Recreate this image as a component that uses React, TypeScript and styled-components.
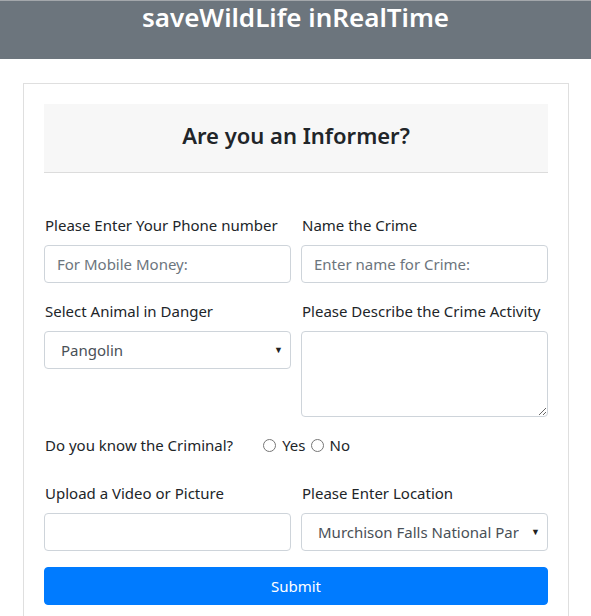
import styled, { createGlobalStyle } from 'styled-components';

const GlobalStyle = createGlobalStyle`
    * { box-sizing: border-box; }
    body {
        margin: 0;
        background: #fff;
        font-family: "Noto Sans", "Open Sans", sans-serif;
        font-size: 15px;
        line-height: 1.5;
        color: #212529;
    }
`;

const TopBar = styled.header`
    height: 59px;
    background: #6c757d;
    border-top: 1px solid #a3a7ab;
    display: flex;
    justify-content: center;
    align-items: flex-start;
`;

const Brand = styled.h1`
    margin: 0;
    color: #fff;
    font-size: 26px;
    font-weight: 600;
    line-height: 33px;
`;

const Container = styled.main`
    padding: 24px 22px 0 23px;
`;

const Card = styled.section`
    border: 1px solid #dfdfdf;
    border-bottom: none;
    padding: 20px 20px 4px;
    min-height: 540px;
`;

const CardHeader = styled.div`
    height: 69px;
    background: #f7f7f7;
    border-bottom: 1px solid #dcdcdc;
    display: flex;
    justify-content: center;
    align-items: center;
`;

const CardTitle = styled.h4`
    margin: 0 0 5px;
    font-size: 22px;
    font-weight: 600;
    color: #212529;
`;

const Form = styled.form`
    padding-top: 40px;
`;

const Row = styled.div`
    display: grid;
    grid-template-columns: 1fr 1fr;
    column-gap: 10px;
    margin-bottom: 16px;
`;

const Group = styled.div`
    display: flex;
    flex-direction: column;
`;

const Label = styled.label`
    margin-bottom: 8px;
    line-height: 24px;
    padding-left: 1px;
`;

const Input = styled.input`
    height: 38px;
    width: 100%;
    padding: 6px 12px;
    border: 1px solid #ced4da;
    border-radius: 4px;
    font: inherit;
    color: #495057;
    &::placeholder { color: #6c757d; }
`;

const TextArea = styled.textarea`
    height: 86px;
    width: 100%;
    padding: 6px 12px;
    border: 1px solid #ced4da;
    border-radius: 4px;
    font: inherit;
    resize: vertical;
`;

const SelectWrap = styled.div`
    position: relative;
`;

const Select = styled.select`
    height: 38px;
    width: 100%;
    padding: 6px 28px 6px 16px;
    border: 1px solid #ced4da;
    border-radius: 4px;
    font: inherit;
    color: #495057;
    background: #fff;
    appearance: none;
`;

const Caret = styled.span`
    position: absolute;
    right: 8px;
    top: 50%;
    transform: translateY(-50%);
    font-size: 9px;
    color: #222;
    pointer-events: none;
`;

const RadioRow = styled.div`
    display: flex;
    align-items: center;
    line-height: 24px;
    margin-bottom: 24px;
    padding-left: 1px;
`;

const Question = styled.span`
    margin-right: 30px;
`;

const RadioLabel = styled.label`
    display: inline-flex;
    align-items: center;
    margin-right: 5px;
`;

const Radio = styled.input`
    margin: 0 6px 0 0;
    width: 13px;
    height: 13px;
`;

const SubmitButton = styled.button`
    width: 100%;
    height: 38px;
    border: 1px solid #007bff;
    border-radius: 4px;
    background: #007bff;
    color: #fff;
    font: inherit;
`;

export default function App() {
    return (
        <>
            <GlobalStyle />
            <TopBar>
                <Brand>saveWildLife inRealTime</Brand>
            </TopBar>
            <Container>
                <Card>
                    <CardHeader>
                        <CardTitle>Are you an Informer?</CardTitle>
                    </CardHeader>
                    <Form onSubmit={(e) => e.preventDefault()}>
                        <Row>
                            <Group>
                                <Label>Please Enter Your Phone number</Label>
                                <Input placeholder="For Mobile Money:" />
                            </Group>
                            <Group>
                                <Label>Name the Crime</Label>
                                <Input placeholder="Enter name for Crime:" />
                            </Group>
                        </Row>
                        <Row>
                            <Group>
                                <Label>Select Animal in Danger</Label>
                                <SelectWrap>
                                    <Select defaultValue="Pangolin">
                                        <option>Pangolin</option>
                                        <option>Elephant</option>
                                        <option>Rhino</option>
                                    </Select>
                                    <Caret>▼</Caret>
                                </SelectWrap>
                            </Group>
                            <Group>
                                <Label>Please Describe the Crime Activity</Label>
                                <TextArea />
                            </Group>
                        </Row>
                        <RadioRow>
                            <Question>Do you know the Criminal?</Question>
                            <RadioLabel>
                                <Radio type="radio" name="known" />
                                Yes
                            </RadioLabel>
                            <RadioLabel>
                                <Radio type="radio" name="known" />
                                No
                            </RadioLabel>
                        </RadioRow>
                        <Row>
                            <Group>
                                <Label>Upload a Video or Picture</Label>
                                <Input />
                            </Group>
                            <Group>
                                <Label>Please Enter Location</Label>
                                <SelectWrap>
                                    <Select defaultValue="Murchison Falls National Park">
                                        <option>Murchison Falls National Park</option>
                                        <option>Queen Elizabeth National Park</option>
                                    </Select>
                                    <Caret>▼</Caret>
                                </SelectWrap>
                            </Group>
                        </Row>
                        <SubmitButton type="submit">Submit</SubmitButton>
                    </Form>
                </Card>
            </Container>
        </>
    );
}
